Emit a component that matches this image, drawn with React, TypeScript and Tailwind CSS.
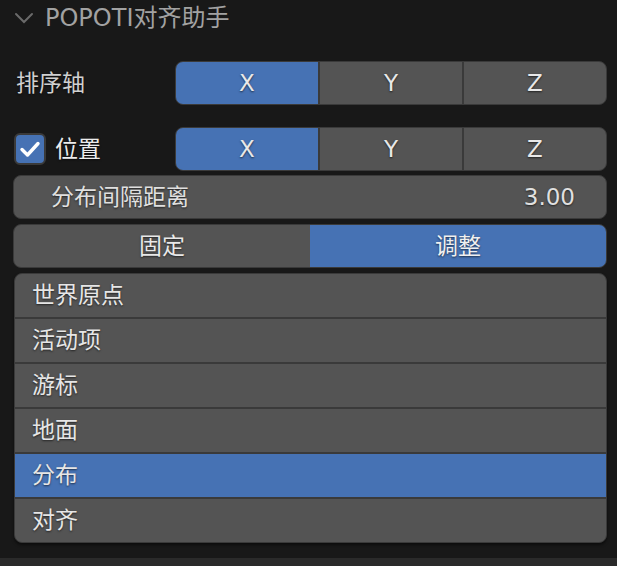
import { useState } from 'react';

const font = "font-['DejaVu_Sans','Noto_Sans_CJK_SC',sans-serif]";
const shadow = '[text-shadow:0_1px_2px_rgba(0,0,0,0.6)]';

const axes = ['X', 'Y', 'Z'];
const targets = ['世界原点', '活动项', '游标', '地面', '分布', '对齐'];

function AxisGroup({ value, onChange }: { value: string; onChange: (v: string) => void }) {
  return (
    <div className="flex h-[44px] w-[432px] overflow-hidden rounded-[8px] border border-[#3a3a3a] bg-[#3a3a3a] gap-[2px]">
      {axes.map((a) => (
        <button
          key={a}
          type="button"
          onClick={() => onChange(a)}
          className={`flex-1 text-[23px] text-[#e8e8e8] ${shadow} ${
            value === a ? 'bg-[#4672b4]' : 'bg-[#545454]'
          }`}
        >
          {a}
        </button>
      ))}
    </div>
  );
}

export default function App() {
  const [sortAxis, setSortAxis] = useState('X');
  const [posAxis, setPosAxis] = useState('X');
  const [usePos, setUsePos] = useState(true);
  const [mode, setMode] = useState<'fixed' | 'adjust'>('adjust');
  const [target, setTarget] = useState('分布');

  return (
    <div className={`relative h-[566px] w-[617px] overflow-hidden bg-[#181818] ${font}`}>
      {/* Header */}
      <div className="flex h-[36px] items-center pl-[14px]">
        <svg width="20" height="12" viewBox="0 0 20 12" className="mr-[11px]">
          <path d="M2 2 L10 10 L18 2" fill="none" stroke="#6a6a6a" strokeWidth="2" strokeLinecap="round" />
        </svg>
        <span className="text-[24px] leading-none text-[#a2a2a2]">POPOTI对齐助手</span>
      </div>

      <div className="flex w-[608px] flex-col pl-[13px] pt-[25px] pr-[1px]">
        {/* Sort axis */}
        <div className="flex h-[44px] items-center justify-between">
          <span className={`pl-[3px] text-[23px] text-[#d0d0d0] ${shadow}`}>排序轴</span>
          <AxisGroup value={sortAxis} onChange={setSortAxis} />
        </div>

        {/* Position */}
        <div className="mt-[22px] flex h-[44px] items-center justify-between">
          <label className="flex items-center gap-[9px] pl-[1px]">
            <button
              type="button"
              onClick={() => setUsePos(!usePos)}
              className={`flex h-[32px] w-[32px] items-center justify-center rounded-[6px] border-2 border-[#3a3a3a] ${
                usePos ? 'bg-[#4672b4]' : 'bg-[#545454]'
              }`}
            >
              {usePos && (
                <svg width="22" height="18" viewBox="0 0 22 18">
                  <path d="M3 9.5 L8.5 15 L19 3.5" fill="none" stroke="#ffffff" strokeWidth="3.4" strokeLinecap="round" strokeLinejoin="round" />
                </svg>
              )}
            </button>
            <span className={`text-[23px] text-[#ececec] ${shadow}`}>位置</span>
          </label>
          <AxisGroup value={posAxis} onChange={setPosAxis} />
        </div>

        {/* Spacing field */}
        <div className={`mt-[4px] flex h-[44px] items-center justify-between rounded-[8px] border border-[#3a3a3a] bg-[#545454] pl-[37px] pr-[31px] text-[23px] text-[#e0e0e0] ${shadow}`}>
          <span>分布间隔距离</span>
          <span>3.00</span>
        </div>

        {/* Mode toggle */}
        <div className="mt-[5px] flex h-[44px] overflow-hidden rounded-[8px] border border-[#3a3a3a] bg-[#3a3a3a]">
          <button
            type="button"
            onClick={() => setMode('fixed')}
            className={`w-[296px] text-[23px] text-[#e8e8e8] ${shadow} ${mode === 'fixed' ? 'bg-[#4672b4]' : 'bg-[#545454]'}`}
          >
            固定
          </button>
          <button
            type="button"
            onClick={() => setMode('adjust')}
            className={`flex-1 text-[23px] text-[#f0f0f0] ${shadow} ${mode === 'adjust' ? 'bg-[#4672b4]' : 'bg-[#545454]'}`}
          >
            调整
          </button>
        </div>

        {/* Target list */}
        <div className="ml-[1px] mt-[5px] flex flex-col gap-[2px] overflow-hidden rounded-[8px] border border-[#3a3a3a] bg-[#3a3a3a] shadow-[0_2px_3px_rgba(0,0,0,0.5)]">
          {targets.map((t) => (
            <button
              key={t}
              type="button"
              onClick={() => setTarget(t)}
              className={`flex h-[43px] items-center pl-[17px] text-left text-[23px] text-[#e6e6e6] ${shadow} ${
                target === t ? 'bg-[#4672b4]' : 'bg-[#545454]'
              }`}
            >
              {t}
            </button>
          ))}
        </div>
      </div>

      {/* Bottom ruler strip */}
      <div className="absolute bottom-0 left-0 flex h-[8px] w-full bg-[#2a2a2a]">
        {Array.from({ length: 13 }).map((_, i) => (
          <div key={i} className="ml-[5px] mr-[44px] h-full w-[1px] bg-[#3c3c3c]" />
        ))}
      </div>
    </div>
  );
}
